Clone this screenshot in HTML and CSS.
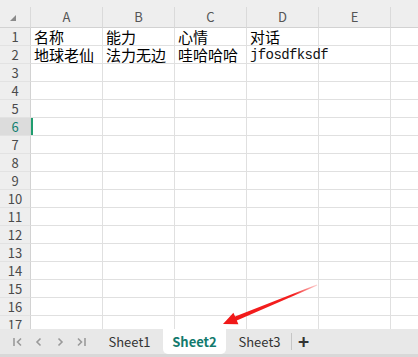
FILE: index.html
```html
<!DOCTYPE html>
<html lang="zh-CN">
<head>
  <meta charset="UTF-8" />
  <title>Sheet2</title>
  <link rel="stylesheet" href="styles.css">
</head>
<body>
  <div class="top-strip"></div>

  <div class="sheet" id="sheet">
    <div class="corner"><span class="tri"></span></div>
    <div class="colhead">A</div>
    <div class="colhead">B</div>
    <div class="colhead">C</div>
    <div class="colhead">D</div>
    <div class="colhead">E</div>
    <div class="colhead"></div>

    <div class="rowhead">1</div>
    <div class="cell">名称</div>
    <div class="cell">能力</div>
    <div class="cell">心情</div>
    <div class="cell">对话</div>
    <div class="cell"></div>
    <div class="cell"></div>

    <div class="rowhead">2</div>
    <div class="cell">地球老仙</div>
    <div class="cell">法力无边</div>
    <div class="cell">哇哈哈哈</div>
    <div class="cell mono">jfosdfksdf</div>
    <div class="cell"></div>
    <div class="cell"></div>
  </div>

  <div class="tabbar">
    <div class="nav">
      <svg class="nav-icon" width="10" height="10" viewBox="0 0 10 10"><path d="M1 1v8M8 1.5L4.5 5 8 8.5" /></svg>
      <svg class="nav-icon" width="10" height="10" viewBox="0 0 10 10"><path d="M6.5 1.5L3 5l3.5 3.5" /></svg>
      <svg class="nav-icon" width="10" height="10" viewBox="0 0 10 10"><path d="M3.5 1.5L7 5 3.5 8.5" /></svg>
      <svg class="nav-icon" width="10" height="10" viewBox="0 0 10 10"><path d="M2 1.5L5.5 5 2 8.5M9 1v8" /></svg>
    </div>
    <div class="tab">Sheet1</div>
    <div class="tab active">Sheet2</div>
    <div class="tab">Sheet3</div>
    <div class="sep"></div>
    <div class="add">+</div>
  </div>

  <svg class="arrow" width="418" height="357" viewBox="0 0 418 357">
    <defs>
      <linearGradient id="fade" x1="317" y1="285" x2="223" y2="324" gradientUnits="userSpaceOnUse">
        <stop offset="0" stop-color="#f42020" stop-opacity="0.2" />
        <stop offset="0.25" stop-color="#f42020" />
        <stop offset="1" stop-color="#f01818" />
      </linearGradient>
    </defs>
    <polygon fill="url(#fade)" points="316.8,284.5 235.1,316.6 233.4,312.8 223,324 238.4,324.3 236.8,320.5 317.3,285.5" />
  </svg>

<script>
let sheet = document.getElementById('sheet');

for (let r = 3; r <= 17; r++) {
  const head = document.createElement('div');
  head.className = 'rowhead';
  if (r === 6) head.classList.add('selected');
  head.textContent = r;
  sheet.appendChild(head);

  for (let c = 0; c < 6; c++) {
    const cell = document.createElement('div');
    cell.className = 'cell';
    if (r === 6 && c === 0) cell.classList.add('active');
    sheet.appendChild(cell);
  }
}
</script>
</body>
</html>
```

FILE: styles.css
```css
body {
  margin: 0;
  width: 418px;
  height: 357px;
  overflow: hidden;
  position: relative;
  background: #fff;
  font-family: "Noto Sans CJK SC", "Noto Sans", sans-serif;
}

.top-strip {
  height: 7px;
  background: #eeeeee;
}

.sheet {
  display: grid;
  grid-template-columns: 31px repeat(6, 72px);
  grid-template-rows: 21px;
  grid-auto-rows: 18px;
  height: 322px;
  overflow: hidden;
}

.sheet > div {
  box-sizing: border-box;
}

.corner,
.colhead {
  background: #eeeeee;
  border-right: 1px solid #dadada;
  border-bottom: 1px solid #d2d2d2;
}

.corner {
  position: relative;
}

.tri {
  position: absolute;
  left: 10px;
  top: 8px;
  width: 0;
  height: 0;
  border-left: 6px solid transparent;
  border-bottom: 6px solid #8a8a8a;
}

.colhead {
  font-size: 13px;
  line-height: 20px;
  text-align: center;
  color: #555;
}

.rowhead {
  background: #eeeeee;
  border-right: 1px solid #d2d2d2;
  border-bottom: 1px solid #e2e2e2;
  font-size: 13px;
  line-height: 17px;
  text-align: center;
  color: #4a4a4a;
}

.rowhead.selected {
  background: #dcdcdc;
  color: #12806f;
}

.cell {
  border-right: 1px solid #e0e0e0;
  border-bottom: 1px solid #e0e0e0;
  padding-left: 3px;
  font-size: 15px;
  line-height: 17px;
  color: #000;
  white-space: nowrap;
}

.cell.mono {
  font-family: "Liberation Mono", monospace;
  font-size: 14px;
  letter-spacing: -0.6px;
  line-height: 18px;
  color: #111;
}

.cell.active {
  box-shadow: inset 2px 0 0 #1f9d6e;
}

.tabbar {
  display: flex;
  align-items: stretch;
  height: 25px;
  background: #e8e8e8;
  border-bottom: 3px solid #d8d8d8;
  font-size: 13px;
}

.nav {
  width: 98px;
  display: flex;
  align-items: center;
  gap: 11px;
  padding-left: 13px;
  box-sizing: border-box;
}

.nav-icon {
  fill: none;
  stroke: #9a9a9a;
  stroke-width: 1.6;
}

.tab {
  width: 63px;
  margin-right: 2px;
  text-align: center;
  line-height: 25px;
  color: #333;
}

.tab.active {
  background: #fff;
  color: #127a6d;
  font-weight: bold;
  border-radius: 0 0 5px 5px;
}

.sep {
  width: 1px;
  margin: 4px 0 4px -2px;
  background: #c6c6c6;
}

.add {
  margin-left: 6px;
  font-size: 19px;
  font-weight: bold;
  line-height: 24px;
  color: #333;
}

.arrow {
  position: absolute;
  left: 0;
  top: 0;
  pointer-events: none;
}
```
